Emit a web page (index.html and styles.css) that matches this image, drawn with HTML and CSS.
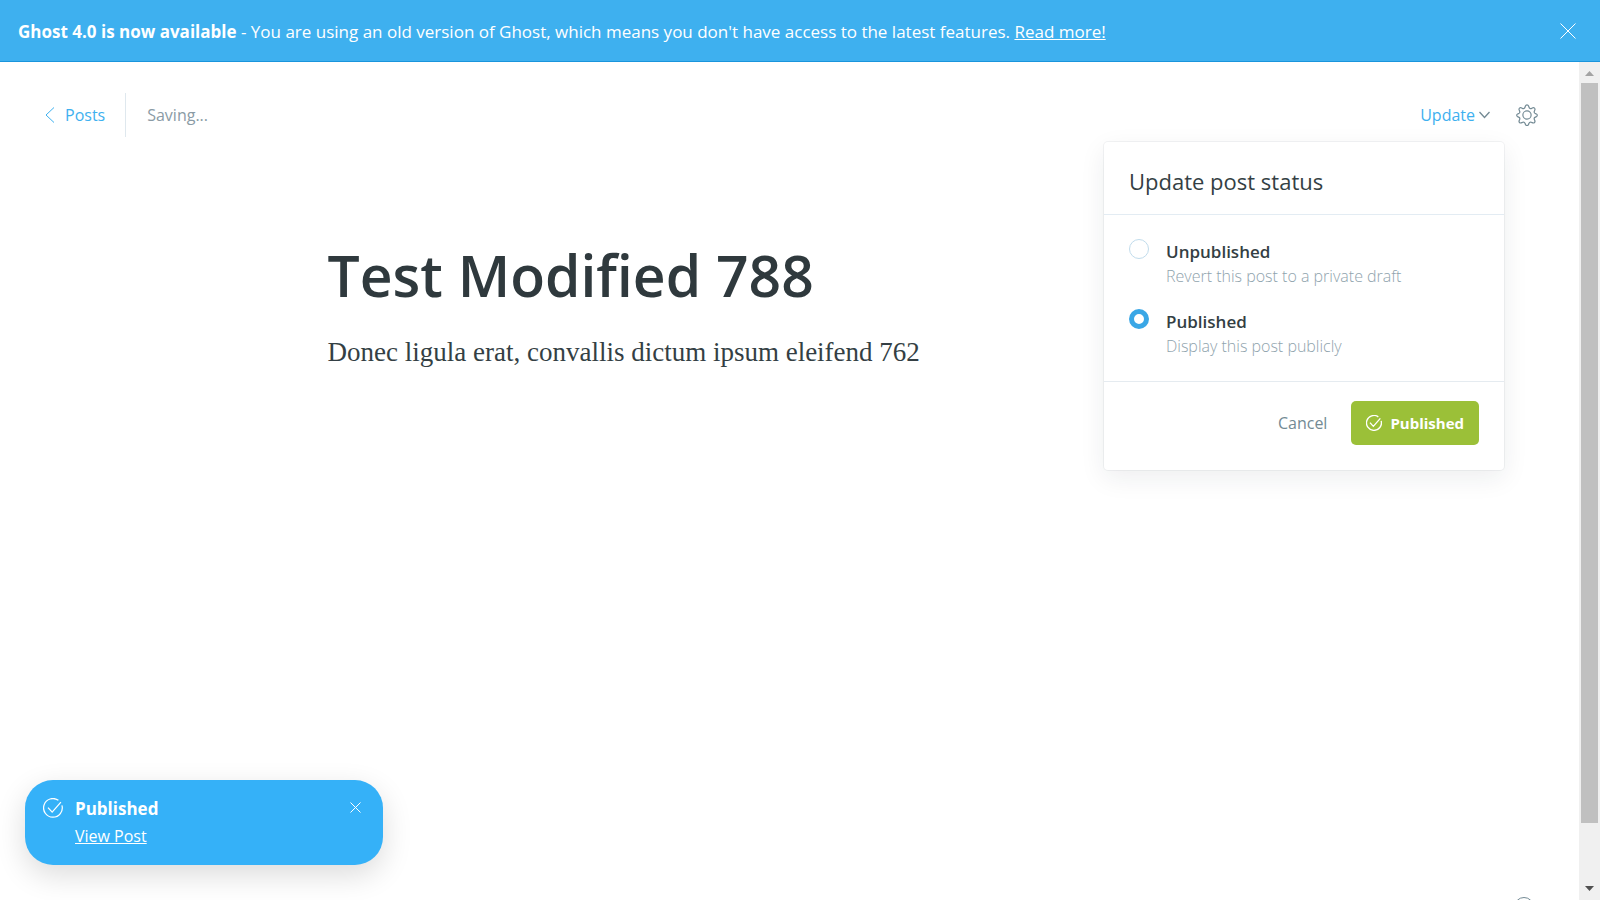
FILE: index.html
```html
<!DOCTYPE html>
<html lang="en">
<head>
<meta charset="utf-8">
<title>Ghost editor</title>
<link rel="stylesheet" href="styles.css">
</head>
<body>
<div class="app">
  <aside class="banner">
    <p class="banner-text"><strong>Ghost 4.0 is now available</strong> - You are using an old version of Ghost, which means you don't have access to the latest features. <a href="#">Read more!</a></p>
    <button class="icon-button" type="button" aria-label="Dismiss">
      <svg width="16" height="16" viewBox="0 0 16 16"><path d="M.5.5l15 15M15.500.5l-15 15"/></svg>
    </button>
  </aside>

  <div class="viewport">
    <main class="editor">
      <header class="toolbar">
        <a class="back" href="#">
          <svg width="10" height="16" viewBox="0 0 10 16"><path d="M9 .5L1 8l8 7.500"/></svg>
          Posts
        </a>
        <span class="save-state">Saving...</span>
        <div class="actions">
          <div class="publish">
            <button class="publish-trigger" type="button" aria-expanded="true">
              Update
              <svg width="11" height="8" viewBox="0 0 11 8"><path d="M.5 1l5 5.500 5-5.500"/></svg>
            </button>
            <form class="menu">
              <h2 class="menu-title">Update post status</h2>
              <div class="menu-options">
                <label class="option">
                  <input type="radio" name="status">
                  <span><span class="option-name">Unpublished</span><span class="option-note">Revert this post to a private draft</span></span>
                </label>
                <label class="option">
                  <input type="radio" name="status" checked>
                  <span><span class="option-name">Published</span><span class="option-note">Display this post publicly</span></span>
                </label>
              </div>
              <footer class="menu-footer">
                <button class="cancel" type="button">Cancel</button>
                <button class="confirm" type="button">
                  <svg width="16" height="16" viewBox="0 0 24 24"><path d="M6 11.500l5 5.500L21.500 5M22.700 8.800A11.200 11.200 0 1 1 18.500 2.800"/></svg>
                  Published
                </button>
              </footer>
            </form>
          </div>
          <button class="icon-button settings" type="button" aria-label="Settings">
            <svg width="22" height="22" viewBox="0 0 24 24"><circle cx="12" cy="12" r="4.500"/><path d="M13.700 2.200l.5 1.400a2 2 0 0 0 2.800 1.200l1.300-.7a1.800 1.800 0 0 1 2.300 2.300l-.6 1.400a2 2 0 0 0 1.200 2.700l1.100.4a1.600 1.600 0 0 1 0 2.900l-1.200.5a2 2 0 0 0-1.100 2.600l.6 1.400a1.800 1.800 0 0 1-2.300 2.300l-1.400-.6a2 2 0 0 0-2.700 1.100l-.5 1.200a1.800 1.800 0 0 1-3.400 0l-.5-1.200a2 2 0 0 0-2.700-1.100l-1.400.6a1.800 1.800 0 0 1-2.300-2.300l.6-1.400a2 2 0 0 0-1.100-2.600l-1.200-.5a1.600 1.600 0 0 1 0-2.900l1.100-.4A2 2 0 0 0 4 7.800l-.6-1.400a1.800 1.800 0 0 1 2.300-2.300l1.300.7a2 2 0 0 0 2.800-1.200l.5-1.400a1.800 1.800 0 0 1 3.400 0z"/></svg>
          </button>
        </div>
      </header>
      <article class="post">
        <h1>Test Modified 788</h1>
        <p>Donec ligula erat, convallis dictum ipsum eleifend 762</p>
      </article>
      <a class="help" href="#" aria-label="Help"></a>
    </main>
    <div class="scrollbar" aria-hidden="true">
      <svg width="9" height="5" viewBox="0 0 9 5"><path d="M0 5L4.500 0 9 5z" fill="#a3a3a3"/></svg>
      <div class="track"><div class="thumb"></div></div>
      <svg width="9" height="5" viewBox="0 0 9 5"><path d="M0 0l4.500 5L9 0z" fill="#505050"/></svg>
    </div>
  </div>

  <section class="toast" role="status">
    <svg width="20" height="20" viewBox="0 0 24 24"><path d="M6 11.500l5 5.500L21.500 5M22.700 8.800A11.200 11.200 0 1 1 18.500 2.800"/></svg>
    <div class="toast-body"><strong>Published</strong><a href="#">View Post</a></div>
    <button class="icon-button" type="button" aria-label="Close">
      <svg width="11" height="11" viewBox="0 0 11 11"><path d="M.5.5l10 10M10.500.5l-10 10"/></svg>
    </button>
  </section>
</div>
</body>
</html>
```
FILE: styles.css
```css
* { box-sizing: border-box; }

body {
  margin: 0;
  font-family: "Open Sans", "Noto Sans", sans-serif;
  font-size: 16px;
  color: #343f44;
  background: #fff;
}

h1, h2, p { margin: 0; }
button { font: inherit; color: inherit; border: 0; padding: 0; background: none; cursor: pointer; }
svg { display: block; flex: none; fill: none; stroke: currentColor; }

.app { display: flex; flex-direction: column; height: 100vh; overflow: hidden; }

.banner {
  display: flex;
  align-items: center;
  justify-content: space-between;
  height: 62px;
  padding: 0 24px 0 18px;
  color: #fff;
  background: #3eb0ef;
  border-bottom: 1px solid #1b95dc;
}
.banner-text { padding-top: 2px; font-size: 17px; line-height: 24px; }
.banner a, .toast a { color: inherit; }

.viewport { display: flex; flex: 1; min-height: 0; }
.editor { position: relative; flex: 1; min-width: 0; }

.toolbar { display: flex; align-items: center; height: 106px; padding: 0 41px 0 45px; }
.back {
  display: flex;
  align-items: center;
  gap: 10px;
  height: 44px;
  padding-right: 20px;
  border-right: 1px solid #dfe8ee;
  color: #3eb0ef;
  text-decoration: none;
}
.save-state { padding-left: 21px; color: #8a9ba5; }
.actions { display: flex; align-items: center; gap: 26px; margin-left: auto; }
.publish { position: relative; }
.publish-trigger { display: flex; align-items: center; gap: 4px; color: #3eb0ef; }
.publish-trigger svg, .settings { color: #738a94; }
.publish-trigger svg, .settings svg { stroke-width: 1.3; }

.menu {
  position: absolute;
  top: 38px;
  right: -14px;
  width: 400px;
  border-radius: 4px;
  background: #fff;
  box-shadow: 0 0 0 1px rgba(99, 114, 130, .08), 0 8px 26px rgba(27, 39, 51, .08);
}
.menu-title {
  padding: 23px 25px 17px;
  border-bottom: 1px solid #e3ecf3;
  font-size: 22px;
  line-height: 32px;
  font-weight: 400;
}
.menu-options { display: grid; gap: 20px; padding: 24px 25px 22px; border-bottom: 1px solid #e5ebf0; }
.option { display: flex; gap: 17px; }
.option input {
  appearance: none;
  width: 20px;
  height: 20px;
  margin: 0;
  border: 1px solid #c1dcec;
  border-radius: 50%;
}
.option input:checked { border: 5px solid #3aa7e6; }
.option-name, .option-note { display: block; line-height: 25px; }
.option-name { font-size: 17px; font-weight: 600; }
.option-note { color: #8fa3ad; font-weight: 300; }

.menu-footer { display: flex; justify-content: flex-end; align-items: center; gap: 24px; padding: 19px 25px 25px; }
.cancel { color: #738a94; }
.confirm {
  display: flex;
  align-items: center;
  gap: 8px;
  height: 44px;
  padding: 0 15px;
  border-radius: 5px;
  background: #9bc038;
  color: #fff;
  font-size: 15px;
  font-weight: 700;
}
.confirm svg { stroke-width: 2; }

.post { width: 100%; max-width: 924px; margin: 0 auto; padding-top: 67px; }
.post h1 { font-size: 57px; line-height: 80px; font-weight: 600; color: #2f393d; }
.post p { margin-top: 19px; font-family: Georgia, "Liberation Serif", serif; font-size: 27px; line-height: 36px; }

.help {
  position: absolute;
  right: 45px;
  bottom: -17px;
  width: 20px;
  height: 20px;
  border: 1px solid #738a94;
  border-radius: 50%;
}

.scrollbar { display: flex; flex-direction: column; align-items: center; width: 21px; padding: 9px 0; background: #f0f0f0; }
.scrollbar svg { stroke: none; }
.track { flex: 1; width: 17px; padding: 7px 0; }
.thumb { height: 93%; background: #c0c0c0; }

.toast {
  position: absolute;
  left: 25px;
  bottom: 35px;
  display: flex;
  align-items: flex-start;
  gap: 12px;
  width: 358px;
  padding: 18px 22px 16px 18px;
  border-radius: 28px;
  background: #35b1f8;
  color: #fff;
  box-shadow: 0 10px 30px rgba(0, 0, 0, .14);
}
.toast > svg { stroke-width: 1.5; }
.toast-body { display: grid; flex: 1; gap: 3px; }
.toast-body strong { font-size: 17px; line-height: 22px; }
.toast-body a { justify-self: start; line-height: 26px; }
.toast .icon-button { padding-top: 4px; }
```
